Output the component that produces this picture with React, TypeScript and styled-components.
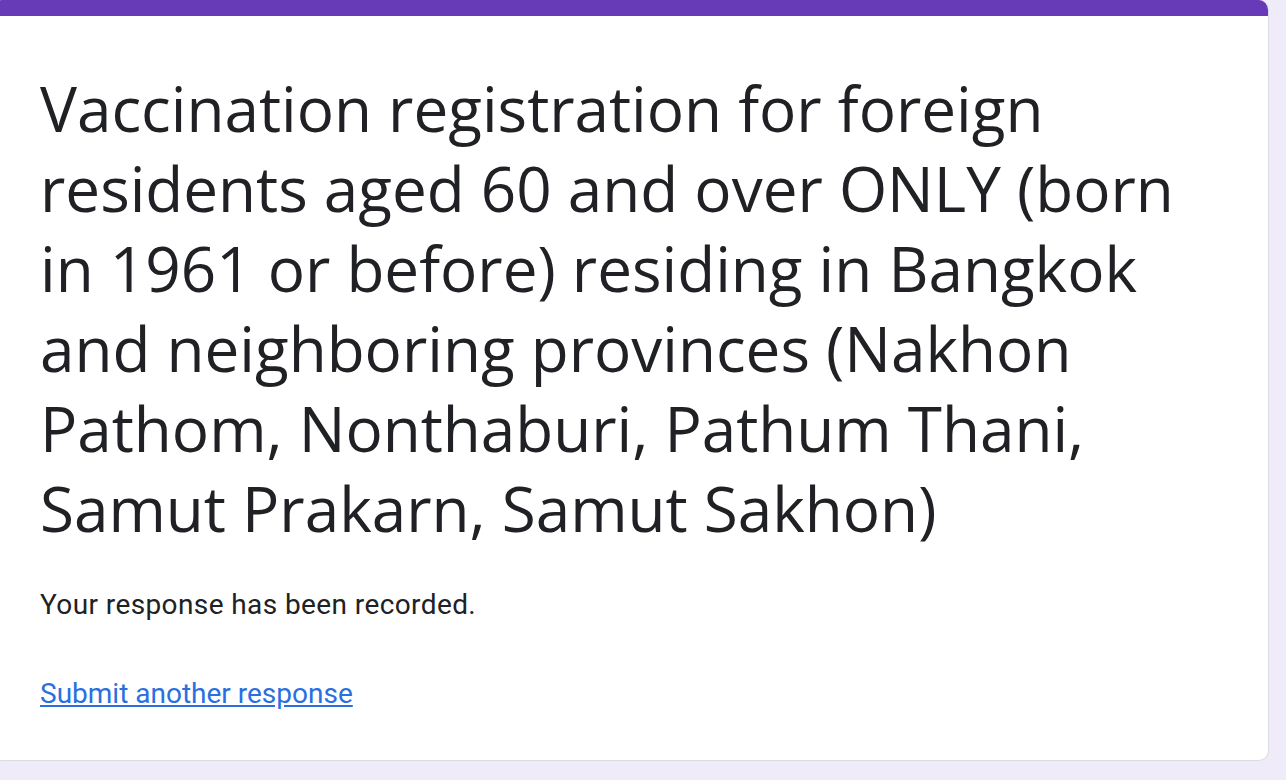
import React from 'react';
import styled, { createGlobalStyle } from 'styled-components';

const GlobalStyle = createGlobalStyle`
  html, body {
    margin: 0;
    padding: 0;
    background-color: #f0ebf8;
    overflow: hidden;
  }
`;

const titleLines = [
  'Vaccination registration for foreign',
  'residents aged 60 and over ONLY (born',
  'in 1961 or before) residing in Bangkok',
  'and neighboring provinces (Nakhon',
  'Pathom, Nonthaburi, Pathum Thani,',
  'Samut Prakarn, Samut Sakhon)',
];

const App: React.FC = () => {
  return (
    <>
      <GlobalStyle />
      <Page>
        <Card>
          <AccentBar />
          <CardBody>
            <FormTitle>
              {titleLines.map((line) => (
                <TitleLine key={line}>{line} </TitleLine>
              ))}
            </FormTitle>
            <Message>Your response has been recorded.</Message>
            <AnotherLink href="#">Submit another response</AnotherLink>
          </CardBody>
        </Card>
      </Page>
    </>
  );
};

const Page = styled.div`
  width: 1286px;
  height: 780px;
  padding-right: 17px;
  box-sizing: border-box;
  display: flex;
  align-items: flex-start;
  justify-content: flex-end;
`;

const Card = styled.div`
  width: 1278px;
  margin-left: -8px;
  height: 761px;
  background-color: #fff;
  border: 1px solid #dadce0;
  border-top: none;
  border-radius: 10px;
  overflow: hidden;
  box-sizing: border-box;
  display: flex;
  flex-direction: column;
`;

const AccentBar = styled.div`
  height: 16px;
  background-color: #673ab7;
  flex-shrink: 0;
`;

const CardBody = styled.div`
  padding: 52px 40px 0 47px;
  display: flex;
  flex-direction: column;
  align-items: flex-start;
`;

const FormTitle = styled.h1`
  margin: 0;
  font-family: 'Open Sans', 'Noto Sans', sans-serif;
  font-weight: 400;
  font-size: 62px;
  line-height: 80px;
  color: #202124;
`;

const TitleLine = styled.span`
  display: block;
  white-space: nowrap;
`;

const Message = styled.div`
  margin-top: 39px;
  font-family: Roboto, 'Liberation Sans', sans-serif;
  font-size: 28px;
  line-height: 36px;
  letter-spacing: 0.4px;
  color: #202124;
`;

const AnotherLink = styled.a`
  margin-top: 53px;
  font-family: Roboto, 'Liberation Sans', sans-serif;
  font-size: 28px;
  line-height: 36px;
  color: #2a6fe0;
  text-decoration: underline;
`;

export default App;
